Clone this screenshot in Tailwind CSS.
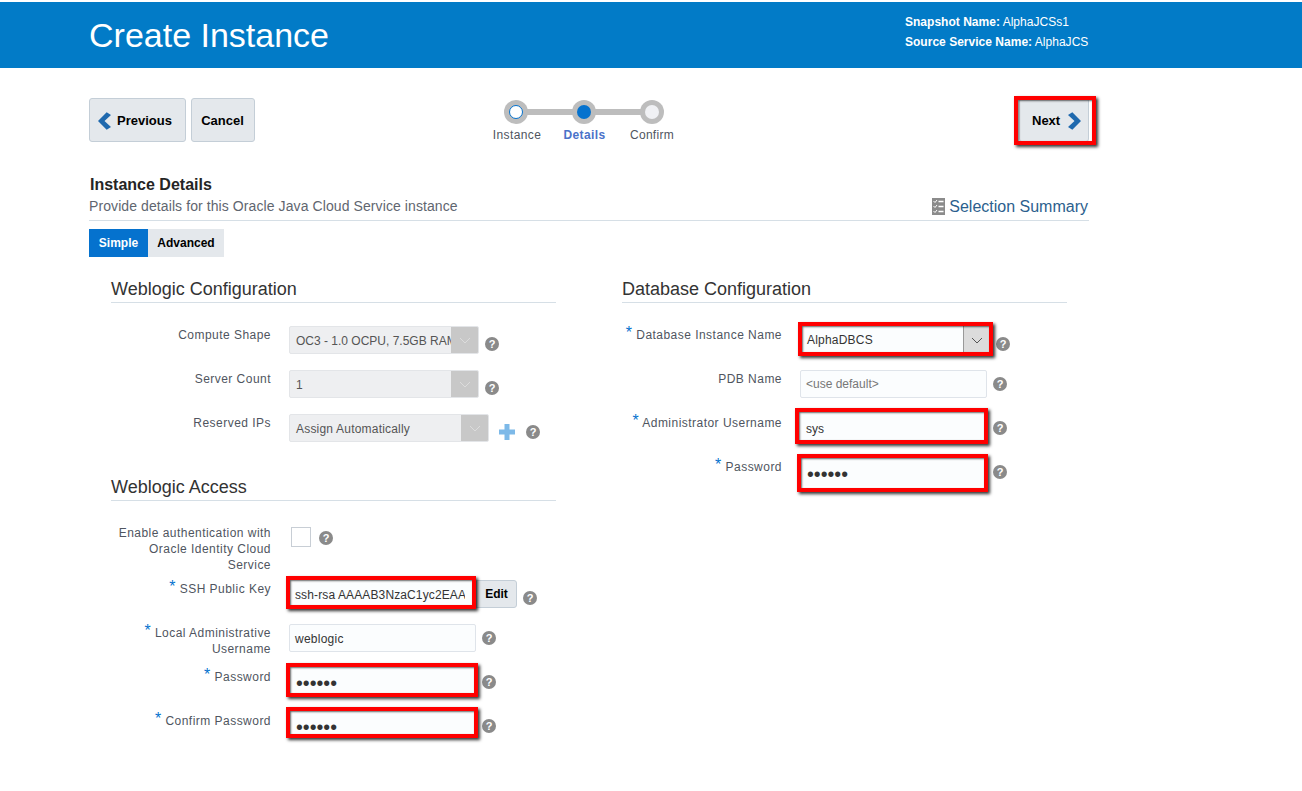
<!DOCTYPE html>
<html>
<head>
<meta charset="utf-8">
<script src="https://cdn.jsdelivr.net/npm/@tailwindcss/browser@4"></script>
</head>
<body class="bg-white font-['Liberation_Sans',Arial,sans-serif] text-[#333]">
<div class="w-[1302px] h-[791px] overflow-hidden pt-[2px]">
  <header class="h-[66px] bg-[#027bc7] pl-[89px] flex text-white">
    <h1 class="w-[816px] text-[34px] leading-[66px]">Create Instance</h1>
    <div class="pt-[10px] text-[12px] leading-[20px] tracking-[0.02px]">
      <div><b>Snapshot Name:</b> AlphaJCSs1</div>
      <div><b>Source Service Name:</b> AlphaJCS</div>
    </div>
  </header>

  <main class="ml-[89px] w-[1000px]">
    <div class="mt-[30px] flex h-[44px]">
      <button class="w-[97px] h-[44px] flex items-center gap-[6px] pl-[8px] pt-[1px] bg-[#e4e8ec] border border-[#c4ced7] rounded-[3px] text-[13px] font-bold text-black">
        <svg width="13" height="18" viewBox="0 0 12 16"><polygon points="8,0 12,2.5 6,8 12,13.5 8,16 0,8" fill="#1f69ae"/></svg>
        Previous
      </button>
      <button class="ml-[5px] w-[64px] h-[44px] pt-[1px] pr-[1px] bg-[#e4e8ec] border border-[#c4ced7] rounded-[3px] text-[13px] font-bold text-black">Cancel</button>

      <div class="relative ml-[227px] w-[204px] grid grid-cols-[68px_68px_68px] pt-[2px] h-[44px]">
        <div class="absolute left-[34px] top-[11px] w-[136px] h-[6px] bg-[#bdbdbd]"></div>
        <div class="relative flex flex-col items-center">
          <div class="w-[24px] h-[24px] rounded-full bg-[#bdbdbd] flex items-center justify-center"><div class="w-[14px] h-[14px] rounded-full bg-white border-[1.5px] border-[#0572ce]"></div></div>
          <div class="mt-[3px] ml-[2px] text-[12px] leading-[16px] tracking-[0.4px] text-[#4f5560]">Instance</div>
        </div>
        <div class="relative flex flex-col items-center">
          <div class="w-[24px] h-[24px] rounded-full bg-[#bdbdbd] flex items-center justify-center"><div class="w-[14px] h-[14px] rounded-full bg-[#0572ce]"></div></div>
          <div class="mt-[3px] ml-[1px] text-[12px] leading-[16px] tracking-[0.4px] font-bold text-[#4a72c9]">Details</div>
        </div>
        <div class="relative flex flex-col items-center">
          <div class="w-[24px] h-[24px] rounded-full bg-[#bdbdbd] flex items-center justify-center"><div class="w-[14px] h-[14px] rounded-full bg-[#f0f1f4]"></div></div>
          <div class="mt-[3px] text-[12px] leading-[16px] tracking-[0.3px] text-[#4f5560]">Confirm</div>
        </div>
      </div>

      <div class="relative ml-auto">
        <button class="w-[70px] h-[44px] flex items-center gap-[8px] pl-[12px] pt-[1px] bg-[#e4e8ec] border border-[#c4ced7] rounded-[3px] text-[13px] font-bold text-black">
          Next
          <svg width="13" height="18" viewBox="0 0 12 16"><polygon points="4,0 0,2.5 6,8 0,13.5 4,16 12,8" fill="#1f69ae"/></svg>
        </button>
        <div class="absolute left-[-5px] right-[-7px] top-[-2px] bottom-[-3px] border-[4px] border-[#f00] shadow-[2px_2px_3px_rgba(0,0,0,.8),inset_1px_1px_2px_rgba(0,0,0,.6)]"></div>
      </div>
    </div>

    <div class="mt-[35px] border-b border-[#d6dfe6] h-[44px] relative">
      <div class="pl-[1px] text-[16px] leading-[16px] font-bold text-[#252525]">Instance Details</div>
      <div class="flex justify-between mt-[5px]">
        <div class="text-[14px] leading-[16px] tracking-[0.09px] text-[#5f6670]">Provide details for this Oracle Java Cloud Service instance</div>
        <div class="flex items-center gap-[4px] text-[16px] leading-[16px] text-[#2c5f8e] pr-[1px]">
          <svg width="13" height="17" viewBox="0 0 13 17"><rect width="13" height="17" fill="#8b8b8b"/><path d="M1.500 3l1.500 1.500 2-2.500M1.500 8l1.500 1.500 2-2.500M1.500 13l1.500 1.500 2-2.500" stroke="#fff" stroke-width="1" fill="none"/><path d="M6.500 3.500h5M6.500 8.500h5M6.500 13.500h5" stroke="#fff" stroke-width="1.500"/></svg>
          Selection Summary
        </div>
      </div>
    </div>

    <div class="mt-[8px] flex h-[28px] text-[12px] font-bold">
      <div class="w-[59px] bg-[#0572ce] text-white flex items-center justify-center">Simple</div>
      <div class="w-[76px] bg-[#e4e8ec] text-black flex items-center justify-center">Advanced</div>
    </div>

    <div class="flex mt-[22px]">
      <!-- Left column -->
      <div class="ml-[22px] w-[445px]">
        <h2 class="h-[24px] border-b border-[#d6dfe6] text-[18px] leading-[20px] text-[#333]">Weblogic Configuration</h2>

        <div class="mt-[23px] flex h-[44px]">
          <label class="w-[160px] pt-[1px] text-right text-[12px] leading-[16px] tracking-[0.47px] text-[#4f5560]">Compute Shape</label>
          <div class="ml-[18px] w-[190px] h-[28px] flex bg-[#eeeff1] border border-[#e3e5e8] rounded-[2px] text-[12px] leading-[28px] text-[#555] overflow-hidden">
            <div class="flex-1 pl-[6px] overflow-hidden whitespace-nowrap">OC3 - 1.0 OCPU, 7.5GB RAM</div>
            <div class="w-[27px] bg-[#c8c8c8] flex items-center justify-center"><svg width="12" height="7" viewBox="0 0 12 7"><path d="M1 1l5 5 5-5" stroke="#dcdcdc" fill="none"/></svg></div>
          </div>
          <span class="ml-[6px] mt-[11px] w-[14px] h-[14px] rounded-full bg-[#8a8a8a] text-white text-[11px] leading-[14px] font-bold text-center">?</span>
        </div>
        <div class="flex h-[44px]">
          <label class="w-[160px] pt-[1px] text-right text-[12px] leading-[16px] tracking-[0.47px] text-[#4f5560]">Server Count</label>
          <div class="ml-[18px] w-[190px] h-[28px] flex bg-[#eeeff1] border border-[#e3e5e8] rounded-[2px] text-[12px] leading-[28px] text-[#555] overflow-hidden">
            <div class="flex-1 pl-[6px]">1</div>
            <div class="w-[27px] bg-[#c8c8c8] flex items-center justify-center"><svg width="12" height="7" viewBox="0 0 12 7"><path d="M1 1l5 5 5-5" stroke="#dcdcdc" fill="none"/></svg></div>
          </div>
          <span class="ml-[6px] mt-[11px] w-[14px] h-[14px] rounded-full bg-[#8a8a8a] text-white text-[11px] leading-[14px] font-bold text-center">?</span>
        </div>
        <div class="flex h-[44px]">
          <label class="w-[160px] pt-[1px] text-right text-[12px] leading-[16px] tracking-[0.47px] text-[#4f5560]">Reserved IPs</label>
          <div class="ml-[18px] w-[200px] h-[28px] flex bg-[#eeeff1] border border-[#e3e5e8] rounded-[2px] text-[12px] leading-[28px] tracking-[0.2px] text-[#555] overflow-hidden">
            <div class="flex-1 pl-[6px]">Assign Automatically</div>
            <div class="w-[27px] bg-[#c8c8c8] flex items-center justify-center"><svg width="12" height="7" viewBox="0 0 12 7"><path d="M1 1l5 5 5-5" stroke="#dcdcdc" fill="none"/></svg></div>
          </div>
          <svg class="ml-[10px] mt-[10px]" width="16" height="16" viewBox="0 0 16 16"><path d="M5.500 0h5v5.500H16v5h-5.500V16h-5v-5.500H0v-5h5.500z" fill="#7db9e8"/></svg>
          <span class="ml-[11px] mt-[11px] w-[14px] h-[14px] rounded-full bg-[#8a8a8a] text-white text-[11px] leading-[14px] font-bold text-center">?</span>
        </div>

        <h2 class="mt-[19px] h-[24px] border-b border-[#d6dfe6] text-[18px] leading-[20px] text-[#333]">Weblogic Access</h2>

        <div class="mt-[23px] flex h-[56px]">
          <label class="w-[160px] pt-[1px] text-right text-[12px] leading-[16px] tracking-[0.47px] text-[#4f5560]">Enable authentication with Oracle Identity Cloud Service</label>
          <div class="ml-[20px] mt-[3px] w-[20px] h-[20px] border border-[#c8ced5] bg-white"></div>
          <span class="ml-[8px] mt-[7px] w-[14px] h-[14px] rounded-full bg-[#8a8a8a] text-white text-[11px] leading-[14px] font-bold text-center">?</span>
        </div>
        <div class="flex h-[44px]">
          <label class="w-[160px] pt-[1px] text-right text-[12px] leading-[16px] tracking-[0.47px] text-[#4f5560]"><span class="text-[#0572ce] text-[16px] leading-[10px] align-[1px]">*</span> SSH Public Key</label>
          <div class="relative ml-[19px] w-[186px] h-[28px]">
            <div class="h-[28px] bg-[#fbfdfe] pl-[5px] text-[12px] leading-[30px] tracking-[0.12px] text-[#333]"><div class="w-[170px] overflow-hidden whitespace-nowrap">ssh-rsa AAAAB3NzaC1yc2EAAAADAQ</div></div>
            <div class="absolute left-[-4px] right-[0px] top-[-4px] bottom-[-1px] border-[4px] border-[#f00] shadow-[2px_2px_3px_rgba(0,0,0,.8),inset_1px_1px_2px_rgba(0,0,0,.6)]"></div>
          </div>
          <button class="w-[41px] h-[28px] bg-[#e4e8ec] border border-[#c4ced7] rounded-r-[3px] text-[12px] font-bold text-black">Edit</button>
          <span class="ml-[6px] mt-[11px] w-[14px] h-[14px] rounded-full bg-[#8a8a8a] text-white text-[11px] leading-[14px] font-bold text-center">?</span>
        </div>
        <div class="flex h-[44px]">
          <label class="w-[160px] pt-[1px] text-right text-[12px] leading-[16px] tracking-[0.47px] text-[#4f5560]"><span class="text-[#0572ce] text-[16px] leading-[10px] align-[1px]">*</span> Local Administrative Username</label>
          <div class="ml-[18px] w-[187px] h-[28px] bg-[#fbfdfe] border border-[#dfe4ea] rounded-[2px] pl-[5px] text-[12px] leading-[28px] tracking-[0.25px] text-[#333]">weblogic</div>
          <span class="ml-[6px] mt-[7px] w-[14px] h-[14px] rounded-full bg-[#8a8a8a] text-white text-[11px] leading-[14px] font-bold text-center">?</span>
        </div>
        <div class="flex h-[44px]">
          <label class="w-[160px] pt-[1px] text-right text-[12px] leading-[16px] tracking-[0.47px] text-[#4f5560]"><span class="text-[#0572ce] text-[16px] leading-[10px] align-[1px]">*</span> Password</label>
          <div class="relative ml-[18px] w-[187px] h-[28px]">
            <div class="h-[28px] bg-[#fbfdfe] pl-[7px] text-[19.5px] leading-[30px] text-[#333]">••••••</div>
            <div class="absolute left-[-3px] right-[-2px] top-[-5px] bottom-[-1px] border-[4px] border-[#f00] shadow-[2px_2px_3px_rgba(0,0,0,.8),inset_1px_1px_2px_rgba(0,0,0,.6)]"></div>
          </div>
          <span class="ml-[6px] mt-[7px] w-[14px] h-[14px] rounded-full bg-[#8a8a8a] text-white text-[11px] leading-[14px] font-bold text-center">?</span>
        </div>
        <div class="flex h-[44px]">
          <label class="w-[160px] pt-[1px] text-right text-[12px] leading-[16px] tracking-[0.47px] text-[#4f5560]"><span class="text-[#0572ce] text-[16px] leading-[10px] align-[1px]">*</span> Confirm Password</label>
          <div class="relative ml-[18px] w-[187px] h-[28px]">
            <div class="h-[28px] bg-[#fbfdfe] pl-[7px] text-[19.5px] leading-[30px] text-[#333]">••••••</div>
            <div class="absolute left-[-3px] right-[-2px] top-[-5px] bottom-[2px] border-[4px] border-[#f00] shadow-[2px_2px_3px_rgba(0,0,0,.8),inset_1px_1px_2px_rgba(0,0,0,.6)]"></div>
          </div>
          <span class="ml-[6px] mt-[7px] w-[14px] h-[14px] rounded-full bg-[#8a8a8a] text-white text-[11px] leading-[14px] font-bold text-center">?</span>
        </div>
      </div>

      <!-- Right column -->
      <div class="ml-[66px] w-[445px]">
        <h2 class="h-[24px] border-b border-[#d6dfe6] text-[18px] leading-[20px] text-[#333]">Database Configuration</h2>

        <div class="mt-[23px] flex h-[44px]">
          <label class="w-[160px] pt-[1px] text-right text-[12px] leading-[16px] tracking-[0.47px] text-[#4f5560] whitespace-nowrap"><span class="text-[#0572ce] text-[16px] leading-[10px] align-[1px]">*</span> Database Instance Name</label>
          <div class="relative ml-[18px] w-[190px] h-[28px]">
            <div class="h-[28px] flex bg-[#fbfdfe] text-[12px] leading-[29px] tracking-[0.2px] text-[#333]">
              <div class="flex-1 pl-[7px]">AlphaDBCS</div>
              <div class="w-[27px] bg-[#dcdcdc] border-l border-[#999] flex items-center justify-center"><svg width="12" height="7" viewBox="0 0 12 7"><path d="M1 1l5 5 5-5" stroke="#555" fill="none"/></svg></div>
            </div>
            <div class="absolute left-[-2px] right-[-3px] top-[-4px] bottom-[-2px] border-[4px] border-[#f00] shadow-[2px_2px_3px_rgba(0,0,0,.8),inset_1px_1px_2px_rgba(0,0,0,.6)]"></div>
          </div>
          <span class="ml-[6px] mt-[11px] w-[14px] h-[14px] rounded-full bg-[#8a8a8a] text-white text-[11px] leading-[14px] font-bold text-center">?</span>
        </div>
        <div class="flex h-[44px]">
          <label class="w-[160px] pt-[1px] text-right text-[12px] leading-[16px] tracking-[0.47px] text-[#4f5560]">PDB Name</label>
          <div class="ml-[18px] w-[187px] h-[28px] bg-[#fbfdfe] border border-[#dfe4ea] rounded-[2px] pl-[5px] text-[12px] leading-[26px] text-[#777]">&lt;use default&gt;</div>
          <span class="ml-[6px] mt-[7px] w-[14px] h-[14px] rounded-full bg-[#8a8a8a] text-white text-[11px] leading-[14px] font-bold text-center">?</span>
        </div>
        <div class="flex h-[44px]">
          <label class="w-[160px] pt-[1px] text-right text-[12px] leading-[16px] tracking-[0.47px] text-[#4f5560] whitespace-nowrap"><span class="text-[#0572ce] text-[16px] leading-[10px] align-[1px]">*</span> Administrator Username</label>
          <div class="relative ml-[18px] w-[187px] h-[28px]">
            <div class="h-[28px] bg-[#fbfdfe] pl-[6px] text-[12px] leading-[31px] text-[#333]">sys</div>
            <div class="absolute left-[-5px] right-[-1px] top-[-6px] bottom-[-2px] border-[4px] border-[#f00] shadow-[2px_2px_3px_rgba(0,0,0,.8),inset_1px_1px_2px_rgba(0,0,0,.6)]"></div>
          </div>
          <span class="ml-[6px] mt-[7px] w-[14px] h-[14px] rounded-full bg-[#8a8a8a] text-white text-[11px] leading-[14px] font-bold text-center">?</span>
        </div>
        <div class="flex h-[44px]">
          <label class="w-[160px] pt-[1px] text-right text-[12px] leading-[16px] tracking-[0.47px] text-[#4f5560]"><span class="text-[#0572ce] text-[16px] leading-[10px] align-[1px]">*</span> Password</label>
          <div class="relative ml-[18px] w-[187px] h-[28px]">
            <div class="h-[28px] bg-[#fbfdfe] pl-[7px] text-[19.5px] leading-[32px] text-[#333]">••••••</div>
            <div class="absolute left-[-3px] right-[-1px] top-[-4px] bottom-[-6px] border-[4px] border-[#f00] shadow-[2px_2px_3px_rgba(0,0,0,.8),inset_1px_1px_2px_rgba(0,0,0,.6)]"></div>
          </div>
          <span class="ml-[6px] mt-[7px] w-[14px] h-[14px] rounded-full bg-[#8a8a8a] text-white text-[11px] leading-[14px] font-bold text-center">?</span>
        </div>
      </div>
    </div>
  </main>
</div>
</body>
</html>
